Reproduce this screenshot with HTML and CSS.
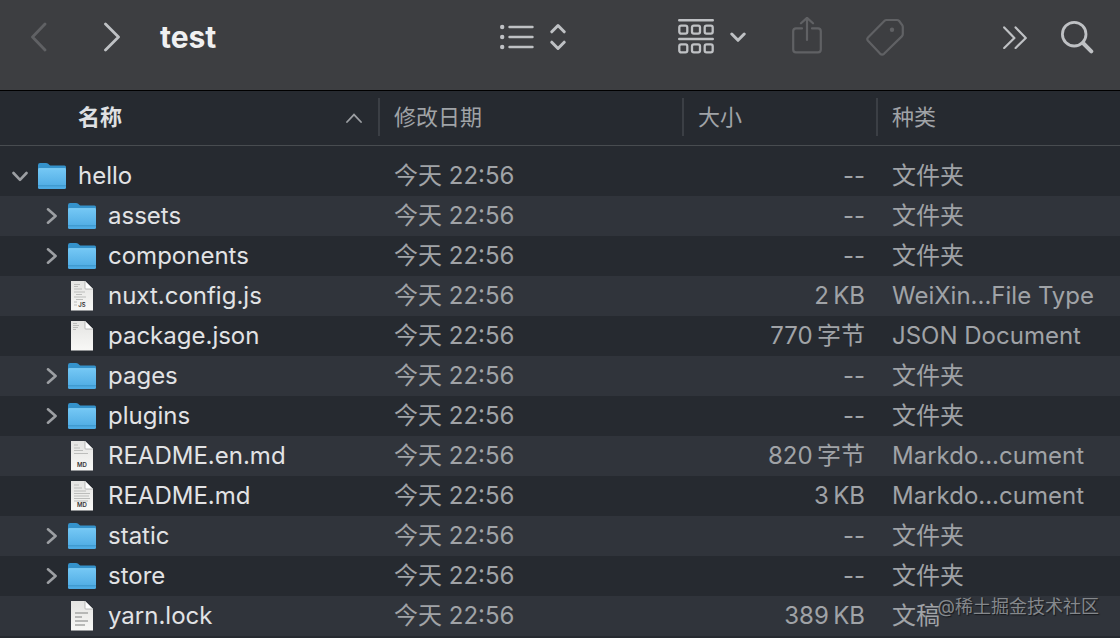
FILE: index.html
```
<!DOCTYPE html>
<html lang="zh-CN">
<head>
    <meta charset="UTF-8">
    <meta name="viewport" content="width=device-width, initial-scale=1.0">
    <title>test</title>
    <link rel="stylesheet" href="styles.css">
</head>
<body>

<!-- Shared icons -->
<svg class="sprite" aria-hidden="true">
    <defs>
        <linearGradient id="folderFront" x1="0" y1="0" x2="0" y2="1">
            <stop offset="0" stop-color="#75c8f5"/>
            <stop offset="1" stop-color="#4ba9e2"/>
        </linearGradient>
        <linearGradient id="paper" x1="0" y1="0" x2="0" y2="1">
            <stop offset="0" stop-color="#e4e4e2"/>
            <stop offset="1" stop-color="#f8f8f6"/>
        </linearGradient>
    </defs>
    <symbol id="folder" viewBox="0 0 28 28">
        <path d="M0 3.2Q0 1 2 1H8Q9.3 1 10.2 1.8L11.5 3Q12.2 3.6 13.4 3.6H26.5Q28 3.6 28 5.1V12H0Z" fill="#3492cb"/>
        <path d="M0 7.4Q0 6.4 1 6.4H27Q28 6.4 28 7.4V25.5Q28 27 26.5 27H1.5Q0 27 0 25.5Z" fill="url(#folderFront)"/>
        <path d="M0.5 6.7H27.5" stroke="#8bd4f8" stroke-width="0.8"/>
        <path d="M0 23.8H28" stroke="#338cc3" stroke-width="0.8"/>
    </symbol>
    <symbol id="page" viewBox="0 0 28 30">
        <path d="M3 0H17L25 8V29.5H3Z" fill="url(#paper)"/>
        <path d="M17 0L25 8H17.8Q17 8 17 7.2Z" fill="#fff"/>
        <path d="M17 0V7.2Q17 8 17.8 8H25" fill="none" stroke="#aaaba9" stroke-width="0.8"/>
    </symbol>
    <symbol id="down" viewBox="0 0 16 16">
        <path d="M1.5 5L8 11.8L14.5 5" fill="none" stroke="currentColor" stroke-width="2.6" stroke-linecap="round" stroke-linejoin="round"/>
    </symbol>
    <symbol id="right" viewBox="0 0 16 16">
        <path d="M6 1.3L13.6 8L6 14.7" fill="none" stroke="currentColor" stroke-width="2.6" stroke-linecap="round" stroke-linejoin="round"/>
    </symbol>
</svg>

<header class="toolbar">
    <nav class="nav">
        <button type="button" class="tool" aria-label="后退" disabled>
            <svg width="16" height="32" viewBox="0 0 16 32"><path d="M14 3L1.5 16L14 29" stroke-width="2.8"/></svg>
        </button>
        <button type="button" class="tool" aria-label="前进">
            <svg width="16" height="32" viewBox="0 0 16 32"><path d="M1.5 3L14.5 16L1.5 29" stroke-width="2.8"/></svg>
        </button>
    </nav>
    <h1 class="title">test</h1>
    <div class="tools">
        <button type="button" class="tool view" aria-label="列表显示">
            <svg width="34" height="28" viewBox="0 0 34 28">
                <path d="M9.5 4H32.5M9.5 14H32.5M9.5 24H32.5" stroke-width="2.4"/>
                <circle class="dot" cx="2.2" cy="4" r="2.2"/>
                <circle class="dot" cx="2.2" cy="14" r="2.2"/>
                <circle class="dot" cx="2.2" cy="24" r="2.2"/>
            </svg>
            <svg width="16" height="28" viewBox="0 0 16 28"><path d="M1.8 8.8L8 2.5L14.2 8.8M1.8 19.2L8 25.5L14.2 19.2" stroke-width="3"/></svg>
        </button>
        <button type="button" class="tool group" aria-label="群组">
            <svg width="36" height="36" viewBox="0 0 36 36">
                <path d="M1.2 1.2H34.8M1.2 20H34.8" stroke-width="2.4"/>
                <g stroke-width="2.3">
                    <rect x="1.3" y="6.6" width="8" height="8" rx="1.8"/>
                    <rect x="14" y="6.6" width="8" height="8" rx="1.8"/>
                    <rect x="26.7" y="6.6" width="8" height="8" rx="1.8"/>
                    <rect x="1.3" y="25.4" width="8" height="8" rx="1.8"/>
                    <rect x="14" y="25.4" width="8" height="8" rx="1.8"/>
                    <rect x="26.7" y="25.4" width="8" height="8" rx="1.8"/>
                </g>
            </svg>
            <svg width="16" height="16" viewBox="0 0 16 16"><path d="M1.8 5L8 11.3L14.2 5" stroke-width="3"/></svg>
        </button>
        <button type="button" class="tool share" aria-label="共享" disabled>
            <svg width="30" height="40" viewBox="0 0 30 40"><path d="M10 11.4H4Q1.2 11.4 1.2 14.2V32.6Q1.2 35.4 4 35.4H26Q28.8 35.4 28.8 32.6V14.2Q28.8 11.4 26 11.4H20M15 23V1M9 6.3L15 0.9L21 6.3" stroke-width="2.2"/></svg>
        </button>
        <button type="button" class="tool tag" aria-label="标签" disabled>
            <svg width="38" height="38" viewBox="0 0 38 38">
                <path d="M20.5 2H31Q32.3 2 33.2 3L36 6.8Q36.8 7.8 36.8 9V16Q36.8 17.3 35.8 18.4L18 35.8Q16 37.4 14 35.6L2 22.8Q.5 21 2 19.4L18.3 2.9Q19.2 2 20.5 2Z" stroke-width="2.2"/>
                <circle class="dot" cx="26" cy="11.8" r="2.2"/>
            </svg>
        </button>
        <button type="button" class="tool more" aria-label="更多">
            <svg width="24" height="24" viewBox="0 0 24 24"><path d="M1.2 2.4L11.4 13L1.2 23M12.6 2.4L22.8 13L12.6 23" stroke-width="2.2"/></svg>
        </button>
        <button type="button" class="tool" aria-label="搜索">
            <svg width="33" height="33" viewBox="0 0 33 33">
                <circle cx="13.2" cy="13.2" r="11.8" stroke-width="2.8"/>
                <path d="M22 22L30.3 30.3" stroke-width="4"/>
            </svg>
        </button>
    </div>
</header>

<main>
    <table class="files">
        <colgroup>
            <col class="col-name">
            <col class="col-date">
            <col class="col-size">
            <col class="col-kind">
        </colgroup>
        <thead>
            <tr>
                <th scope="col" class="sorted" aria-sort="ascending">
                    <button type="button">名称
                        <svg width="16" height="10" viewBox="0 0 16 10" aria-hidden="true"><path d="M1 9L8 1.6L15 9" fill="none" stroke="currentColor" stroke-width="1.8" stroke-linecap="round"/></svg>
                    </button>
                </th>
                <th scope="col"><button type="button">修改日期</button></th>
                <th scope="col"><button type="button">大小</button></th>
                <th scope="col"><button type="button">种类</button></th>
            </tr>
        </thead>
        <tbody>
            <tr>
                <td><div class="name">
                    <button type="button" class="toggle" aria-label="收起 hello" aria-expanded="true"><svg><use href="#down"/></svg></button>
                    <svg class="folder"><use href="#folder"/></svg>hello
                </div></td>
                <td>今天 22:56</td>
                <td class="size">--</td>
                <td>文件夹</td>
            </tr>
            <tr>
                <td><div class="name child">
                    <button type="button" class="toggle" aria-label="展开 assets" aria-expanded="false"><svg><use href="#right"/></svg></button>
                    <svg class="folder"><use href="#folder"/></svg>assets
                </div></td>
                <td>今天 22:56</td>
                <td class="size">--</td>
                <td>文件夹</td>
            </tr>
            <tr>
                <td><div class="name child">
                    <button type="button" class="toggle" aria-label="展开 components" aria-expanded="false"><svg><use href="#right"/></svg></button>
                    <svg class="folder"><use href="#folder"/></svg>components
                </div></td>
                <td>今天 22:56</td>
                <td class="size">--</td>
                <td>文件夹</td>
            </tr>
            <tr>
                <td><div class="name child leaf">
                    <svg class="file" viewBox="0 0 28 30">
                        <use href="#page"/>
                        <path class="print" d="M6 3.5H12M6 5.5H10M6 8H14M6 11H17M8 13.5H14M6 16H18M8 18.5H15M6 21H9M6 24H9"/>
                        <text class="ext" x="14" y="26">JS</text>
                    </svg>nuxt.config.js
                </div></td>
                <td>今天 22:56</td>
                <td class="size">2&thinsp;KB</td>
                <td>WeiXin...File Type</td>
            </tr>
            <tr>
                <td><div class="name child leaf">
                    <svg class="file" viewBox="0 0 28 30">
                        <use href="#page"/>
                        <path class="print" d="M5 2.5H9M5 4.5H11M5 6.5H10M5 8.5H8"/>
                    </svg>package.json
                </div></td>
                <td>今天 22:56</td>
                <td class="size">770&thinsp;字节</td>
                <td>JSON Document</td>
            </tr>
            <tr>
                <td><div class="name child">
                    <button type="button" class="toggle" aria-label="展开 pages" aria-expanded="false"><svg><use href="#right"/></svg></button>
                    <svg class="folder"><use href="#folder"/></svg>pages
                </div></td>
                <td>今天 22:56</td>
                <td class="size">--</td>
                <td>文件夹</td>
            </tr>
            <tr>
                <td><div class="name child">
                    <button type="button" class="toggle" aria-label="展开 plugins" aria-expanded="false"><svg><use href="#right"/></svg></button>
                    <svg class="folder"><use href="#folder"/></svg>plugins
                </div></td>
                <td>今天 22:56</td>
                <td class="size">--</td>
                <td>文件夹</td>
            </tr>
            <tr>
                <td><div class="name child leaf">
                    <svg class="file" viewBox="0 0 28 30">
                        <use href="#page"/>
                        <path class="print" d="M6 4H10M6 7H12M6 9.5H15M6 12.5H20"/>
                        <text class="ext" x="14" y="26">MD</text>
                    </svg>README.en.md
                </div></td>
                <td>今天 22:56</td>
                <td class="size">820&thinsp;字节</td>
                <td>Markdo...cument</td>
            </tr>
            <tr>
                <td><div class="name child leaf">
                    <svg class="file" viewBox="0 0 28 30">
                        <use href="#page"/>
                        <path class="print" d="M6 4H11M6 7H14M6 10H18M6 12.5H22M6 15H21M6 17.5H22M6 20H20"/>
                        <text class="ext" x="14" y="26">MD</text>
                    </svg>README.md
                </div></td>
                <td>今天 22:56</td>
                <td class="size">3&thinsp;KB</td>
                <td>Markdo...cument</td>
            </tr>
            <tr>
                <td><div class="name child">
                    <button type="button" class="toggle" aria-label="展开 static" aria-expanded="false"><svg><use href="#right"/></svg></button>
                    <svg class="folder"><use href="#folder"/></svg>static
                </div></td>
                <td>今天 22:56</td>
                <td class="size">--</td>
                <td>文件夹</td>
            </tr>
            <tr>
                <td><div class="name child">
                    <button type="button" class="toggle" aria-label="展开 store" aria-expanded="false"><svg><use href="#right"/></svg></button>
                    <svg class="folder"><use href="#folder"/></svg>store
                </div></td>
                <td>今天 22:56</td>
                <td class="size">--</td>
                <td>文件夹</td>
            </tr>
            <tr>
                <td><div class="name child leaf">
                    <svg class="file" viewBox="0 0 28 30">
                        <use href="#page"/>
                        <path class="lines" d="M7 12H20M7 16H14M7 20H20M7 24H17"/>
                    </svg>yarn.lock
                </div></td>
                <td>今天 22:56</td>
                <td class="size">389&thinsp;KB</td>
                <td>文稿</td>
            </tr>
        </tbody>
    </table>
</main>

<div class="watermark">@稀土掘金技术社区</div>

</body>
</html>
```
FILE: styles.css
```
* {
    box-sizing: border-box;
}

body {
    position: relative;
    margin: 0;
    background-color: #262a30;
    color: #a0a3a7;
    font-family: Inter, "Noto Sans CJK SC", sans-serif;
    font-size: 24px;
}

button {
    padding: 0;
    border: none;
    background: none;
    color: inherit;
    font: inherit;
}

svg {
    display: block;
    flex-shrink: 0;
}

.sprite {
    position: absolute;
    width: 0;
    height: 0;
}

/* Toolbar */
.toolbar {
    display: flex;
    align-items: center;
    height: 91px;
    padding: 0 26px 16px 31px;
    background-color: #3d3e41;
    border-bottom: 1px solid #000;
}

.nav {
    display: flex;
    gap: 57px;
}

.title {
    flex: 1;
    margin: 0 0 0 40px;
    color: #f0f0f1;
    font-size: 30px;
    font-weight: 700;
    line-height: 40px;
}

.tools {
    display: flex;
    align-items: center;
}

.tool {
    display: flex;
    align-items: center;
    gap: 16px;
    color: #bfc1c4;
}

.tool:disabled {
    color: #606164;
}

.tool svg {
    fill: none;
    stroke: currentColor;
    stroke-linecap: round;
    stroke-linejoin: round;
}

.tool .dot {
    fill: currentColor;
    stroke: none;
}

.view {
    margin-right: 112px;
}

.group {
    margin-right: 46px;
}

.share {
    margin-right: 44px;
}

.tag {
    margin-right: 99px;
}

.more {
    margin-right: 34px;
}

/* File list */
.files {
    width: 100%;
    table-layout: fixed;
    border-collapse: separate;
    border-spacing: 0;
}

.col-name {
    width: 380px;
}

.col-date {
    width: 304px;
}

.col-size {
    width: 194px;
}

th {
    height: 55px;
    padding: 0 0 2px;
    border-bottom: 1px solid #484c50;
    font-size: 22px;
    font-weight: 400;
}

th button {
    display: flex;
    align-items: center;
    width: 100%;
    height: 38px;
    padding: 0 0 5px 14px;
    border-right: 2px solid #3b3f45;
}

th:last-child button {
    border-right: none;
}

.sorted {
    color: #dfe0e2;
    font-weight: 700;
}

.sorted button {
    justify-content: space-between;
    padding: 0 16px 5px 78px;
}

.sorted svg {
    margin-top: 6px;
    color: #9c9fa3;
}

tbody::before {
    content: "";
    display: block;
    height: 10px;
}

tbody tr:nth-child(even) {
    background-color: #30343b;
}

td {
    height: 40px;
    padding: 0 0 0 14px;
    line-height: 38px;
    white-space: nowrap;
}

td:first-child {
    padding: 0;
}

.size {
    padding: 0 13px 0 0;
    text-align: right;
}

.name {
    display: flex;
    align-items: center;
    padding-left: 12px;
    color: #e2e3e5;
}

.child {
    padding-left: 42px;
}

.leaf {
    padding-left: 68px;
}

.toggle {
    margin-right: 10px;
    color: #9c9fa3;
}

.toggle svg {
    width: 16px;
    height: 16px;
}

.folder {
    width: 28px;
    height: 28px;
    margin-right: 12px;
}

.file {
    width: 28px;
    height: 30px;
    margin-right: 12px;
}

.print {
    stroke: #bcbdbb;
    stroke-width: 1;
}

.lines {
    stroke: #a5a6a5;
    stroke-width: 1.6;
}

.ext {
    fill: #333;
    font-size: 6px;
    font-weight: 600;
    text-anchor: middle;
}

.watermark {
    position: absolute;
    right: 21px;
    bottom: 16px;
    color: #85888c;
    font-size: 18px;
    line-height: 26px;
    text-shadow: 1px 1px 1px #15181c;
}
```
